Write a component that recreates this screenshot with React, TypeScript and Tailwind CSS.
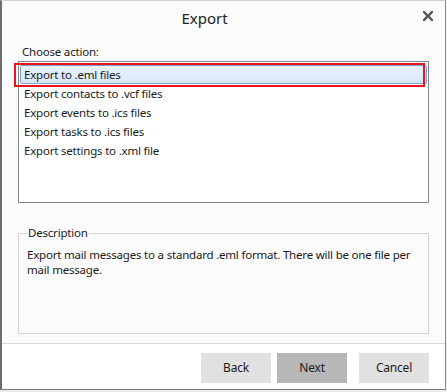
const items = [
  'Export to .eml files',
  'Export contacts to .vcf files',
  'Export events to .ics files',
  'Export tasks to .ics files',
  'Export settings to .xml file',
]

export default function App() {
  return (
    <div
      className="w-[447px] h-[392px] bg-[#ececec] text-[#1a1a1a] tracking-[-0.2px]"
      style={{ fontFamily: '"Noto Sans", "Open Sans", sans-serif' }}
    >
      <div className="w-[446px] h-[390px] flex flex-col bg-[#fbfbfb] border-l-2 border-l-[#6e6e6e] border-t border-t-[#d0d0d0] border-r border-r-[#8c8c8c] border-b border-b-[#7a7a7a]">
        {/* title bar */}
        <div className="relative h-[34px] flex items-center justify-center pr-[38px]">
          <span className="text-[15px] text-[#222] tracking-normal">Export</span>
          <svg
            className="absolute right-[12px] top-[10px]"
            width="10"
            height="10"
            viewBox="0 0 10 10"
          >
            <path d="M1 1 L9 9 M9 1 L1 9" stroke="#555" strokeWidth="2.4" strokeLinecap="square" />
          </svg>
        </div>

        <div className="flex-1 flex flex-col px-4 pt-[9px]">
          <div className="text-[11.5px] leading-[16px] pl-[4px]">Choose action:</div>

          {/* list box */}
          <div className="relative mt-[1px] h-[142px] border border-[#828790] bg-white pt-[3px] px-[1px]">
            {items.map((item, i) => (
              <div
                key={item}
                className={
                  i === 0
                    ? 'h-[19px] flex items-center pl-[3px] text-[11.5px] border border-[#7da2ce] rounded-[2px] bg-gradient-to-b from-[#ebf3fd] to-[#d6e7fc]'
                    : 'h-[19px] flex items-center pl-[4px] text-[11.5px]'
                }
              >
                {item}
              </div>
            ))}
            <div className="absolute left-[-5px] top-[1px] w-[411px] h-[24px] border-2 border-[#e8141b]" />
          </div>

          {/* description group */}
          <fieldset className="mt-[22px] h-[109px] border border-[#d5d5d5] px-[8px] pb-2">
            <legend className="text-[11.5px] leading-[16px] px-[1px]">Description</legend>
            <p className="text-[11.5px] leading-[15px] mt-[6px]">
              Export mail messages to a standard .eml format. There will be one file per mail message.
            </p>
          </fieldset>
        </div>

        {/* footer */}
        <div className="h-[46px] border-t border-[#dadada] bg-white flex items-start justify-end pt-[9px] pr-[16px]">
          <button className="w-[70px] h-[30px] bg-[#e1e1e1] text-[12px]">Back</button>
          <button className="w-[70px] h-[30px] ml-[6px] bg-[#b7b7b7] text-[12px]">Next</button>
          <button className="w-[70px] h-[30px] ml-[12px] bg-[#e1e1e1] text-[12px]">Cancel</button>
        </div>
      </div>
    </div>
  )
}
